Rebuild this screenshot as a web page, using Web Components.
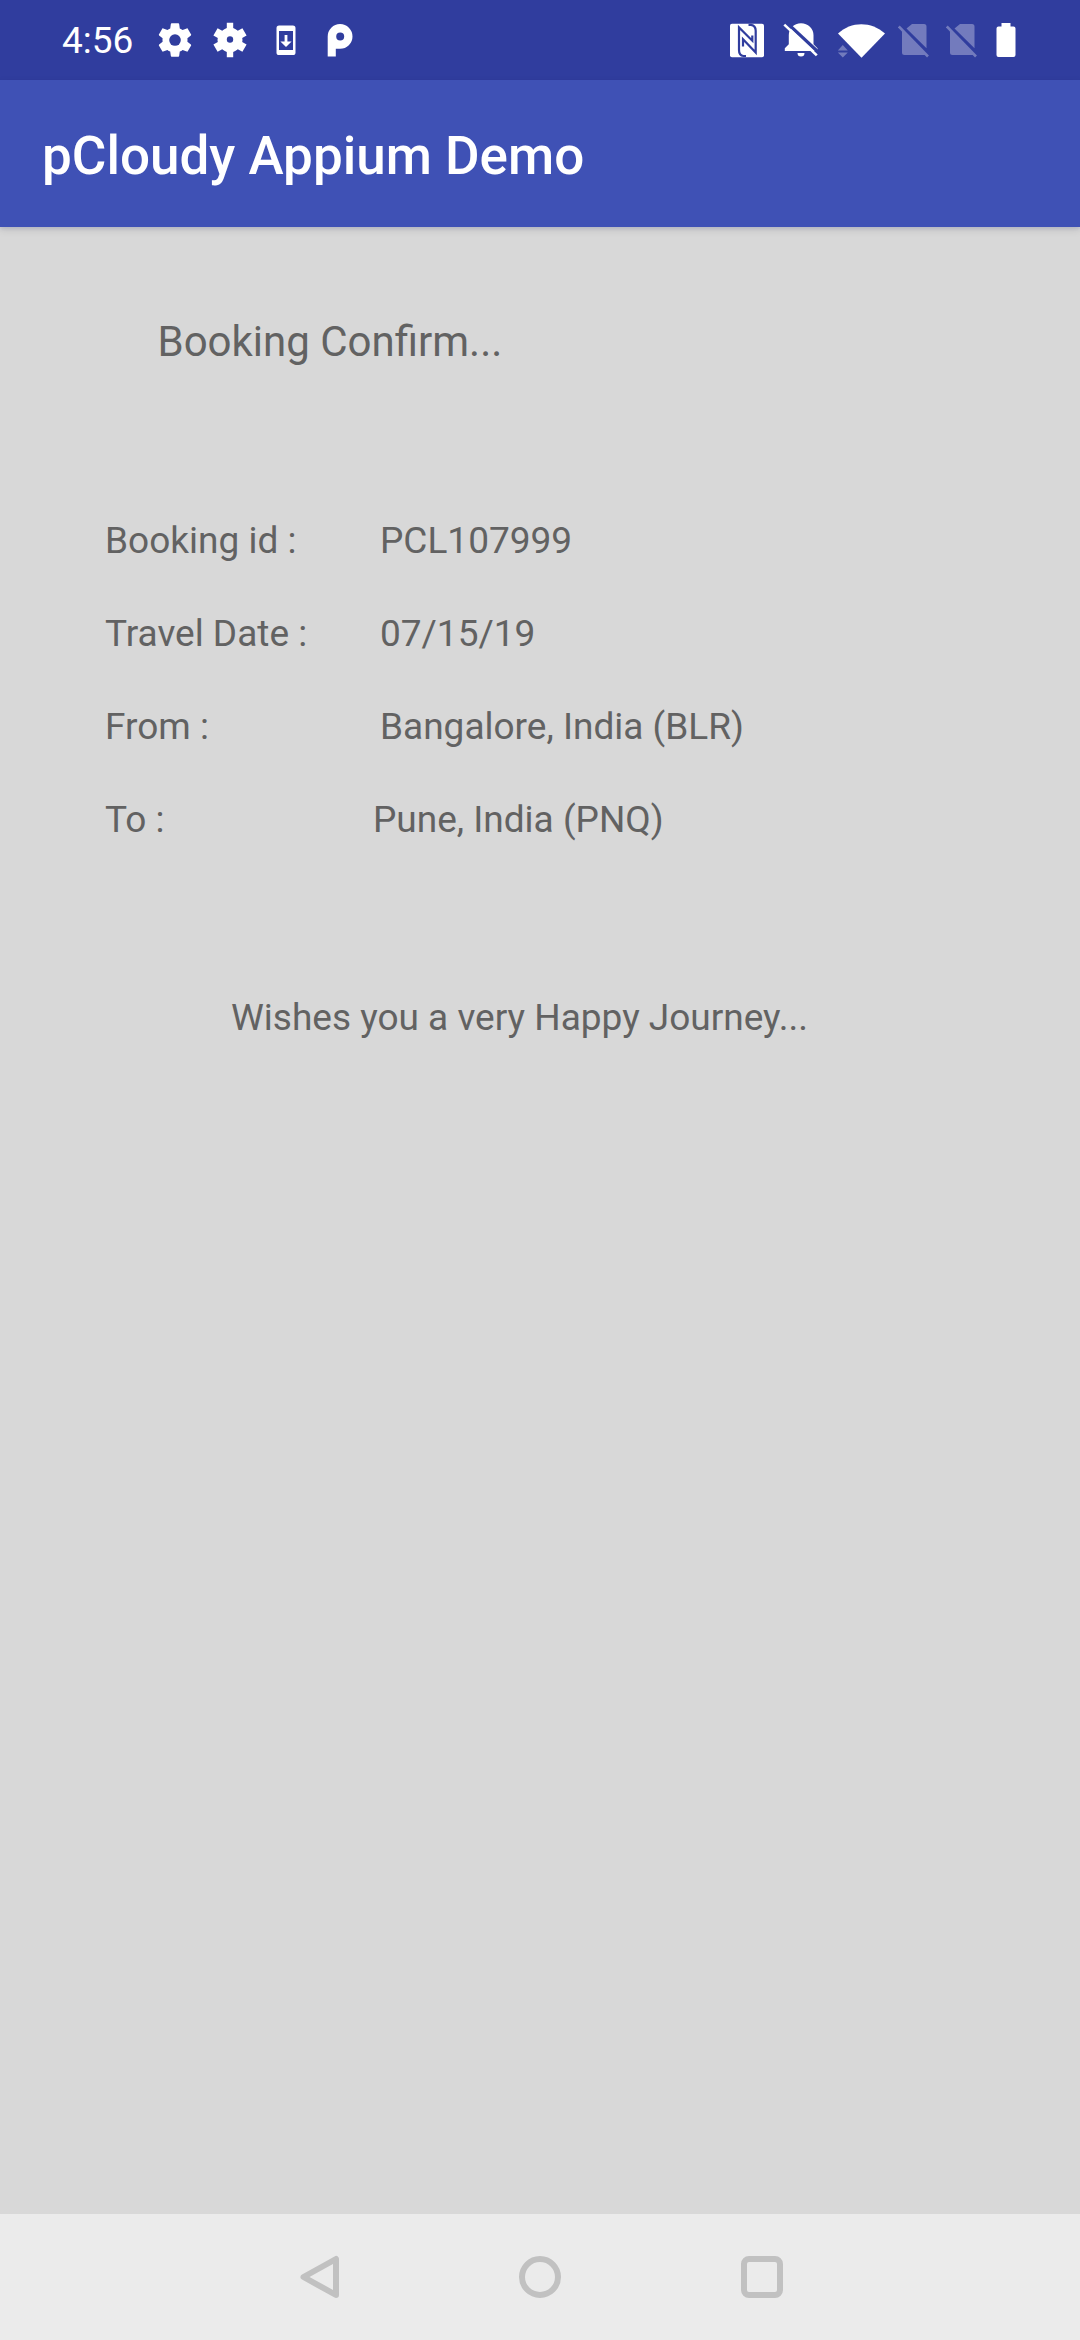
<!DOCTYPE html>
<html lang="en">
<head>
<meta charset="utf-8">
<title>pCloudy Appium Demo</title>
<style>
html,body{margin:0;padding:0;background:#d8d8d8}
body{font-family:Roboto,"Liberation Sans",sans-serif}
</style>
</head>
<body>
<booking-screen></booking-screen>
<script>
const define = (name, html) => customElements.define(name, class extends HTMLElement {
  constructor() {
    super();
    this.attachShadow({ mode: 'open' }).innerHTML = html;
  }
});

const GEAR = 'M19.43 12.98c.04-.32.07-.64.07-.98s-.03-.66-.07-.98l2.11-1.65c.19-.15.24-.42.12-.64l-2-3.46c-.12-.22-.39-.3-.61-.22l-2.49 1c-.52-.4-1.08-.73-1.69-.98l-.38-2.65C14.46 2.18 14.25 2 14 2h-4c-.25 0-.46.18-.49.42l-.38 2.65c-.61.25-1.17.59-1.69.98l-2.49-1c-.23-.09-.49 0-.61.22l-2 3.46c-.13.22-.07.49.12.64l2.11 1.65c-.04.32-.07.65-.07.98s.03.66.07.98l-2.11 1.65c-.19.15-.24.42-.12.64l2 3.46c.12.22.39.3.61.22l2.49-1c.52.4 1.08.73 1.69.98l.38 2.65c.03.24.24.42.49.42h4c.25 0 .46-.18.49-.42l.38-2.65c.61-.25 1.17-.59 1.69-.98l2.49 1c.23.09.49 0 .61-.22l2-3.46c.12-.22.07-.49-.12-.64l-2.11-1.65z';

/* Every status glyph uses a 40px tall box. */
const ICONS = {
  gear: [40, `<g transform="scale(1.667)"><path d="${GEAR}"/><circle cx="12" cy="12" r="3.5" fill="#303d9e"/></g>`],
  cog: [40, `<path d="M16.8 2.8h6.4v5.2q2.6 1 4.6 2.8l4.6-2.6 4.2 7.2-4.4 2.6q.6 2 0 4l4.400 2.600-4.200 7.200-4.600-2.600q-2 1.800-4.600 2.800v5.200h-6.400v-5.200q-2.600-1-4.600-2.800l-4.600 2.600-4.200-7.200 4.400-2.600q-.6-2 0-4l-4.400-2.600 4.200-7.200 4.600 2.600q2-1.800 4.600-2.800z"/><circle cx="20" cy="19.500" r="3.200" fill="#303d9e"/>`],
  phone: [20, `<rect x=".5" y="5.5" width="19" height="29.5" rx="2.6"/><path fill="#303d9e" d="M3 11h14v19H3z"/><path d="M8.6 15h2.8v6.4h4.2L10 27l-5.600-5.600h4.200z"/>`],
  letter: [26, `<path fill-rule="evenodd" d="M.7 36.6V16.5A12.4 12.4 0 1 1 13 28.8H8.8v7.8zM13.2 12.6a4 4 0 1 0 0 8 4 4 0 0 0 0-8z"/>`],
  nfc: [36, `<rect x="1" y="3.800" width="34" height="33.400" rx="2"/><g fill="none" stroke="#303d9e" stroke-width="2.200"><path d="M17 36H14.500Q10 35.500 10 30V7.500L23.300 20.700V15.500"/><path d="M19.500 4.800H22Q26.700 5.500 26.700 10.700V32.500L14 19.300V26.500"/></g>`],
  bell: [36, `<path d="M18 3.200c7 0 12.500 5 12.500 12v9l4 4v2.800H1.800v-2.800l4-4v-9c0-7 5.200-12 12.200-12z"/><path d="M14.500 33h7a3.500 3.500 0 0 1-7 0z"/><path d="M3.700 2.600L36.200 33" stroke="#303d9e" stroke-width="3.200"/><path d="M1.300 4.600L33.800 35.400" stroke="#fff" stroke-width="2.600"/>`],
  wifi: [48, `<path d="M24.500 37.700L1 13.500C14 1 34.500 1 48 13.500z"/><path opacity=".32" d="M.8 30.500L5.800 25l5 5.500zM.8 32.500h10L5.800 37.500z"/>`],
  sim: [32, `<g opacity=".32"><path d="M14 4h12q2.500 0 2.500 2.500v21.700L8.500 8.500zM4 10.500L28.500 34.500q0 .5-1.500.5H6.500Q4 35 4 32.500z"/><path d="M.8 6.500L30 36.500" stroke="#fff" stroke-width="2.600"/></g>`],
  battery: [20, `<path d="M5.500 3h9v3.500h3q2 0 2 2V35q0 2-2 2h-15q-2 0-2-2V8.500q0-2 2-2h3z"/>`]
};

customElements.define('status-icon', class extends HTMLElement {
  connectedCallback() {
    const [w, art] = ICONS[this.getAttribute('name')];
    this.attachShadow({ mode: 'open' }).innerHTML =
      `<style>:host{display:block;flex:none}svg{display:block}</style>
       <svg width="${w}" height="40" viewBox="0 0 ${w} 40" fill="#fff">${art}</svg>`;
  }
});

define('status-bar', `<style>
  :host{display:flex;justify-content:space-between;align-items:center;height:80px;box-sizing:border-box;background:#303d9e;padding:0 64px 0 62px;color:#fff}
  .side{display:flex;align-items:center}
  .time{font-size:37px;line-height:44px;width:93px;padding-top:2px}
  </style>
  <div class="side"><span class="time">4:56</span>
    <status-icon name="gear"></status-icon>
    <status-icon name="cog" style="margin-left:15px"></status-icon>
    <status-icon name="phone" style="margin-left:25.5px"></status-icon>
    <status-icon name="letter" style="margin-left:31.5px"></status-icon></div>
  <div class="side">
    <status-icon name="nfc"></status-icon>
    <status-icon name="bell" style="margin-left:18px"></status-icon>
    <status-icon name="wifi" style="margin-left:18px"></status-icon>
    <status-icon name="sim" style="margin-left:13px"></status-icon>
    <status-icon name="sim" style="margin-left:16px"></status-icon>
    <status-icon name="battery" style="margin-left:18px"></status-icon></div>`);

define('app-bar', `<style>
  :host{display:flex;align-items:center;height:147px;box-sizing:border-box;padding:4px 42px 0;background:#3f51b5;color:#fff;box-shadow:0 3px 8px rgba(0,0,0,.10),0 2px 3px rgba(63,81,181,.12);font-size:53px;font-weight:500;line-height:62px;white-space:nowrap}
  </style><slot></slot>`);

define('info-row', `<style>
  :host{display:flex;align-items:center;height:93px;font-size:37px;line-height:43px;white-space:nowrap}
  .label{width:var(--label-width,275px);flex:none}
  </style><span class="label"><slot name="label"></slot></span><slot></slot>`);

define('nav-bar', `<style>
  :host{display:flex;justify-content:space-between;align-items:center;height:126px;box-sizing:border-box;padding:0 295px 0 297px;background:#ebebeb}
  svg{display:block;fill:none;stroke:#c1c1c1;stroke-width:6;stroke-linejoin:round}
  </style>
  <svg width="46" height="46"><path d="M39 5V41L6.500 23z"/></svg>
  <svg width="46" height="46"><circle cx="22" cy="23" r="18"/></svg>
  <svg width="46" height="46"><rect x="5" y="5" width="36" height="36" rx="5"/></svg>`);

define('booking-screen', `<style>
  :host{display:flex;flex-direction:column;width:1080px;height:2340px;background:#d8d8d8;color:#626262}
  status-bar,app-bar,nav-bar{flex:none}
  main{flex:1;padding-top:90px}
  h1{margin:0 0 128px 157.5px;font-size:42px;font-weight:400;line-height:49px}
  .rows{padding-left:105px}
  .wish{margin:130px 0 0 231px;font-size:37px;line-height:43px}
  </style>
  <status-bar></status-bar>
  <app-bar>pCloudy Appium Demo</app-bar>
  <main>
    <h1>Booking Confirm...</h1>
    <div class="rows">
      <info-row><span slot="label">Booking id :</span>PCL107999</info-row>
      <info-row><span slot="label">Travel Date :</span>07/15/19</info-row>
      <info-row><span slot="label">From :</span>Bangalore, India (BLR)</info-row>
      <info-row style="--label-width:268px"><span slot="label">To :</span>Pune, India (PNQ)</info-row>
    </div>
    <p class="wish">Wishes you a very Happy Journey...</p>
  </main>
  <nav-bar></nav-bar>`);
</script>
</body>
</html>
